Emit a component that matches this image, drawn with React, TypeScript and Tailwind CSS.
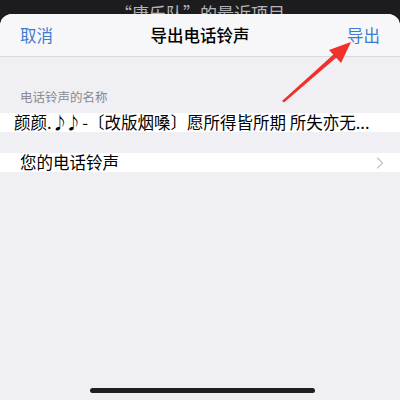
import { ChevronRight } from 'lucide-react';

const FONT = { fontFamily: '"Noto Sans CJK SC", "Noto Sans", sans-serif' };

// Pointer drawn over the sheet, aimed at the export button.
function RedArrow() {
  return (
    <svg className="absolute left-0 top-0 pointer-events-none" width="400" height="400" viewBox="0 0 400 400">
      <polygon points="282,101 284,102.5 337,57 334,54" fill="#f0302a" />
      <polygon points="351,42 329,50 341,63" fill="#f0302a" />
    </svg>
  );
}

export default function App() {
  return (
    <div className="relative w-[400px] h-[400px] overflow-hidden bg-[#1c1c1e] flex flex-col" style={FONT}>
      <div className="h-[14px] shrink-0 overflow-hidden flex justify-center">
        <span className="text-[17px] leading-[17px] mt-[4px] text-[#b4b4b8] whitespace-nowrap">“唐乐队”的最近项目</span>
      </div>

      <div className="flex-1 flex flex-col rounded-t-[12px] bg-[#efeff4] overflow-hidden">
        <header className="h-[43px] shrink-0 grid grid-cols-3 items-center px-5 bg-[#f7f7f9] border-b border-[#d9d9de]">
          <span className="text-[16.5px] text-[#3d7cd0]">取消</span>
          <span className="text-[16.5px] text-black text-center font-medium whitespace-nowrap">导出电话铃声</span>
          <span className="text-[16.5px] text-[#3d7cd0] text-right">导出</span>
        </header>

        <div className="pt-[32px] px-5 text-[12.5px] leading-[16px] text-[#8a8a8f]">电话铃声的名称</div>

        <div className="mt-[8px] h-[19px] bg-white pl-[14px] flex items-center overflow-visible">
          <span className="text-[16.5px] leading-[19px] text-black whitespace-nowrap">
            颜颜.<span className="tracking-[-3px]">♪♪</span> -〔改版烟嗓〕愿所得皆所期 所失亦无...
          </span>
        </div>

        <div className="mt-[21px] h-[19px] bg-white pl-5 pr-[10px] flex items-center justify-between">
          <span className="text-[16.5px] leading-[19px] text-black">您的电话铃声</span>
          <ChevronRight size={20} strokeWidth={1.5} className="text-[#c4c4c9]" />
        </div>

        <div className="flex-1" />
        <div className="mb-[7px] ml-[90px] w-[225px] h-[5px] rounded-full bg-[#1f1f22]" />
      </div>

      <RedArrow />
    </div>
  );
}
